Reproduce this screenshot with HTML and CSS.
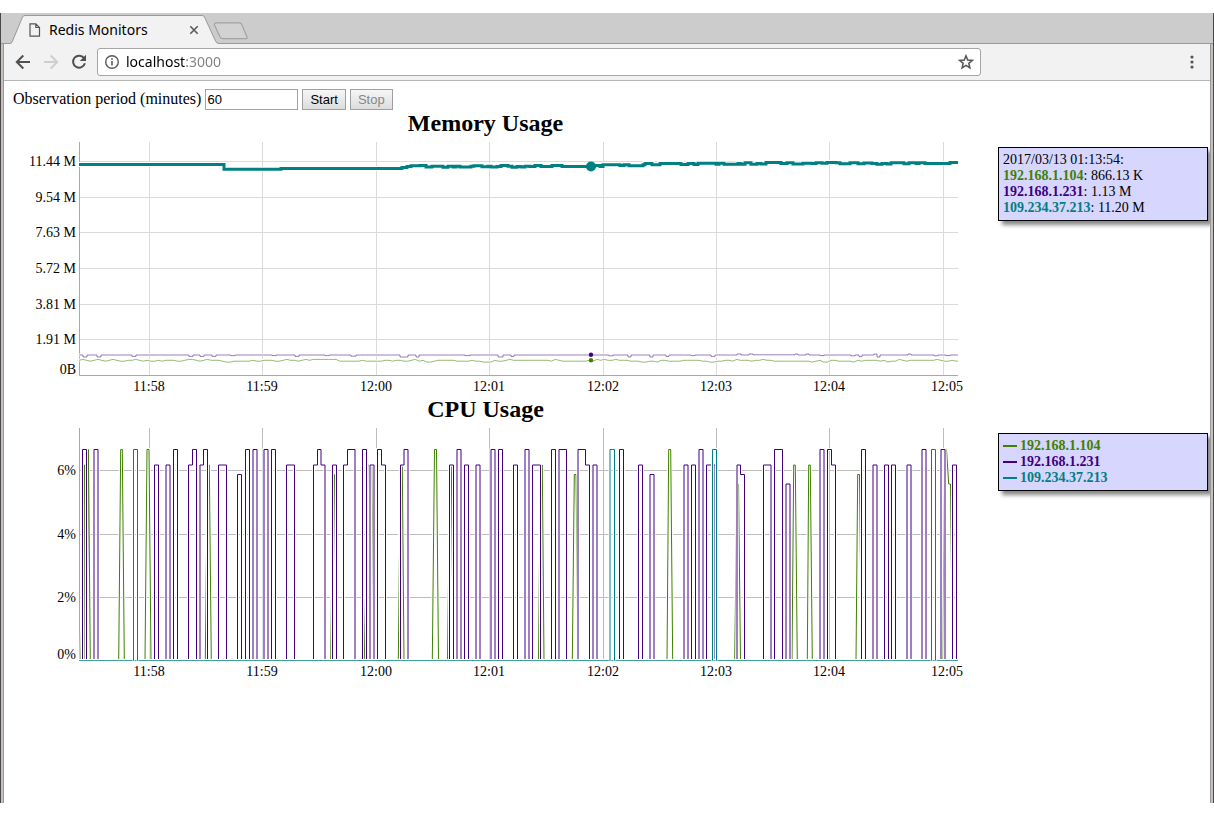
FILE: index.html
```html
<!DOCTYPE html>
<html lang="en">
<head>
<meta charset="utf-8">
<title>Redis Monitors</title>
<link rel="stylesheet" href="styles.css">
</head>
<body>
<div class="window">
  <header class="tabstrip">
    <div class="tab">
      <svg class="tab-shape" viewBox="0 0 209 31" aria-hidden="true"><path d="M0 30.5Q1.5 30.5 2.5 28L12.5 4Q13.3 2.5 15 2.5H192Q193.7 2.5 194.5 4L205.5 28Q206.5 30.5 209 30.5V31H0Z" fill="#f2f2f2"/><path d="M0 30.5Q1.5 30.5 2.5 28L12.5 4Q13.3 2.5 15 2.5H192Q193.7 2.5 194.5 4L205.5 28Q206.5 30.5 209 30.5" fill="none" stroke="#999"/></svg>
      <svg class="tab-icon" viewBox="0 0 12 14" aria-hidden="true"><path d="M1 .8H6.8L10.5 4.5V13.2H1Z M6.8 .8V4.5H10.5" fill="none" stroke="#555" stroke-width="1.2"/></svg>
      <span class="tab-title">Redis Monitors</span>
      <button class="icon-button tab-close" aria-label="Close tab"><svg viewBox="0 0 10 10" width="10" height="10"><path d="M1.3 1.3 8.7 8.7M8.7 1.3 1.3 8.7" stroke="#5a5a5a" stroke-width="1.6"/></svg></button>
    </div>
    <button class="icon-button new-tab" aria-label="New tab"><svg viewBox="0 0 36 18" width="36" height="18"><path d="M3 .9H26Q28 .9 29 3L34 15Q34.6 16.6 33 16.6H10Q8 16.6 7 15L1.5 3Q1 1 3 .9Z" fill="#d2d2d2" stroke="#a3a3a3" stroke-width="1.2"/></svg></button>
  </header>
  <nav class="toolbar">
    <button class="icon-button" aria-label="Back"><svg viewBox="0 0 16 16" width="16" height="16"><path d="M15 8H2M8.3 1.5 1.8 8l6.5 6.5" fill="none" stroke="#505050" stroke-width="2"/></svg></button>
    <button class="icon-button" aria-label="Forward" disabled><svg viewBox="0 0 16 16" width="16" height="16"><path d="M1 8H14M7.7 1.5 14.2 8l-6.5 6.5" fill="none" stroke="#cfcfcf" stroke-width="2"/></svg></button>
    <button class="icon-button" aria-label="Reload"><svg viewBox="0 0 16 16" width="16" height="16"><path d="M13 4.2A6 6 0 1 0 13.9 9.2" fill="none" stroke="#505050" stroke-width="2"/><path d="M15 .8V7H8.8Z" fill="#505050"/></svg></button>
    <div class="omnibox">
      <svg viewBox="0 0 16 16" width="16" height="16" aria-hidden="true"><circle cx="8" cy="8" r="6.3" fill="none" stroke="#5a5a5a" stroke-width="1.4"/><path d="M8 7V11.6M8 4.2V5.8" stroke="#5a5a5a" stroke-width="1.6"/></svg>
      <input class="address" type="text" value="localhost:3000" aria-label="Address">
      <button class="icon-button" aria-label="Bookmark this page"><svg viewBox="0 0 16 16" width="16" height="16"><path d="M8 1.8 9.7 6.1 14.3 6.4 10.8 9.3 11.9 13.8 8 11.3 4.1 13.8 5.2 9.3 1.7 6.4 6.3 6.1Z" fill="none" stroke="#555" stroke-width="1.5"/></svg></button>
    </div>
    <button class="icon-button menu" aria-label="Menu"><svg viewBox="0 0 4 14" width="4" height="14" fill="#555"><circle cx="2" cy="2" r="1.6"/><circle cx="2" cy="7" r="1.6"/><circle cx="2" cy="12" r="1.6"/></svg></button>
  </nav>
  <main class="page">
    <form class="controls">
      <label for="period">Observation period (minutes)</label>
      <input id="period" class="period" type="text" value="60">
      <button type="button" class="push">Start</button>
      <button type="button" class="push" disabled>Stop</button>
    </form>
    <section class="monitor">
      <div class="graph">
        <h2 class="title">Memory Usage</h2>
        <svg class="chart" id="memory" viewBox="13 -4 961 258" role="img" aria-label="Memory usage"></svg>
      </div>
      <div class="legend">
        <div>2017/03/13 01:13:54:</div>
        <div><b class="green">192.168.1.104</b>: 866.13 K</div>
        <div><b class="purple">192.168.1.231</b>: 1.13 M</div>
        <div><b class="teal">109.234.37.213</b>: 11.20 M</div>
      </div>
    </section>
    <section class="monitor">
      <div class="graph">
        <h2 class="title">CPU Usage</h2>
        <svg class="chart" id="cpu" viewBox="13 -4 961 258" role="img" aria-label="CPU usage"></svg>
      </div>
      <div class="legend">
        <div class="key green"><i class="dash"></i><b>192.168.1.104</b></div>
        <div class="key purple"><i class="dash"></i><b>192.168.1.231</b></div>
        <div class="key teal"><i class="dash"></i><b>109.234.37.213</b></div>
      </div>
    </section>
  </main>
</div>
<script src="charts.js"></script>
</body>
</html>
```
FILE: styles.css
```css
* { box-sizing: border-box; }

body {
  margin: 0;
  padding: 13px 0;
  min-height: 100vh;
  display: flex;
  background: #fff;
  color: #000;
  font-family: "Liberation Serif", "Times New Roman", serif;
  font-size: 16px;
}

.window {
  flex: 1;
  min-width: 0;
  display: flex;
  flex-direction: column;
  border: solid #4a4747;
  border-width: 0 1px;
  background: #c4c1be;
}

.icon-button {
  display: flex;
  flex: none;
  padding: 0;
  border: 0;
  background: none;
}

.tabstrip {
  display: flex;
  height: 31px;
  padding-left: 9px;
  background: #ccc;
  border-bottom: 1px solid #999;
}

.tab {
  position: relative;
  display: flex;
  align-items: center;
  width: 207px;
  height: 31px;
  padding: 3px 18px 0 19px;
}

.tab-shape {
  position: absolute;
  left: 0;
  top: 0;
  width: 209px;
  height: 31px;
}

.tab-icon {
  position: relative;
  width: 12px;
  height: 14px;
}

.tab-title {
  position: relative;
  flex: 1;
  margin-left: 8px;
  font: 14px/20px "Noto Sans", "Open Sans", sans-serif;
}

.tab-close { position: relative; }

.new-tab {
  margin: 9px 0 0 -4px;
  height: 18px;
}

.toolbar {
  display: flex;
  align-items: center;
  gap: 12px;
  height: 37px;
  margin: 0 2px;
  padding: 0 16px 2px 11px;
  background: #f2f2f2;
  border: solid #999;
  border-width: 0 1px;
  box-shadow: inset 0 -1px #b6b6b6;
}

.omnibox {
  display: flex;
  flex: 1;
  align-items: center;
  gap: 6px;
  height: 28px;
  margin-left: -2px;
  padding: 0 6px;
  background: #fff;
  border: 1px solid #a6a6a6;
  border-radius: 3px;
}

.address {
  flex: 1;
  min-width: 0;
  padding: 0;
  border: 0;
  color: transparent;
  background: linear-gradient(90deg, #000 59px, #808080 59px);
  -webkit-background-clip: text;
  background-clip: text;
  font: 14px/20px "Noto Sans", "Open Sans", sans-serif;
}

.menu { margin-left: 197px; }

.page {
  flex: 1;
  margin: 0 2px;
  padding: 8px 2px 0 9px;
  border: solid #999;
  border-width: 0 1px;
  background: #fff;
  overflow: hidden;
}

.controls {
  display: flex;
  align-items: center;
  gap: 4px;
  height: 21px;
}

.controls label { padding-bottom: 2px; }

.period, .push {
  height: 21px;
  font: 13px/15px "Liberation Sans", Arial, sans-serif;
}

.period {
  width: 93px;
  padding: 1px;
  border: 1px solid #a3a3a3;
}

.push {
  padding: 0 7px;
  color: #000;
  border: 1px solid #a0a0a0;
  background: linear-gradient(#f6f6f6, #dddddd);
}

.push:disabled { color: #888; }

.monitor {
  display: flex;
  align-items: flex-start;
  gap: 24px;
}

.graph {
  flex: 1;
  min-width: 0;
}

.title {
  margin: 0;
  padding: 0 16px 2px 0;
  text-align: center;
  font-size: 24px;
  line-height: 26px;
}

.chart {
  display: block;
  width: 100%;
  font-size: 14px;
}

.legend {
  flex: none;
  width: 210px;
  margin-top: 37px;
  padding: 4px;
  border: 1px solid #000;
  background: #d6d6ff;
  box-shadow: 4px 4px 4px #888;
  font-size: 14px;
  line-height: 16px;
}

.key {
  display: flex;
  align-items: center;
  gap: 3px;
}

.dash {
  width: 14px;
  border-top: 2px solid currentColor;
}

.green { color: #408000; }
.purple { color: #400080; }
.teal { color: #008080; }

.line { fill: none; }
.halo { fill: none; stroke: #fff; }
.axis { stroke: #a8a8a8; }
```
FILE: charts.js
```js
const LEFT = 79, RIGHT = 958;
const GREEN = '#408000', PURPLE = '#400080', TEAL = '#008080';
const times = [[149, '11:58'], [262, '11:59'], [376, '12:00'], [489, '12:01'],
  [603, '12:02'], [716, '12:03'], [829, '12:04'], [943, '12:05']];

function frame(ticks, gridColor, bottom) {
  let s = '';
  for (const [y, , grid = true] of ticks)
    if (grid) s += `<path d="M${LEFT} ${y + .5}H${RIGHT}" stroke="${gridColor}"/>`;
  for (const [x] of times)
    s += `<path d="M${x + .5} 0V${bottom}" stroke="${gridColor}"/>`;
  return s + `<path class="axis" d="M${LEFT + .5} 0V${bottom + .5}H${RIGHT}" fill="none"/>`;
}

function labels(ticks, baseline) {
  let s = '';
  for (const [y, text, grid = true] of ticks)
    s += `<text x="76" y="${grid ? y + 5 : y}" text-anchor="end">${text}</text>`;
  for (const [x, text] of times)
    s += `<text x="${x > 940 ? x + 4 : x}" y="${baseline}" text-anchor="middle">${text}</text>`;
  return s;
}

function series(d, color, width = 1, opacity = 1) {
  return `<path class="halo" d="${d}" stroke-width="${width + 2}"/>` +
    `<path class="line" d="${d}" stroke="${color}" stroke-width="${width}" stroke-opacity="${opacity}"/>`;
}

// Step line through "x y" pairs.
function steps(pairs) {
  const p = pairs.trim().split(/\s+/).map(Number);
  let d = `M${p[0]} ${p[1]}`;
  for (let i = 2; i < p.length; i += 2) d += `H${p[i]}V${p[i + 1]}`;
  return d + `H${RIGHT}`;
}

/* Memory */
const memTicks = [[19, '11.44 M'], [55, '9.54 M'], [90, '7.63 M'], [126, '5.72 M'],
  [162, '3.81 M'], [197, '1.91 M'], [232, '0B', false]];

const memTeal = steps(`79 22.6 224 27.3 281 26.6 402 25.6 407 24.6 411 23.8 420 23.4 426 25
  432 24.2 443 25.2 448 24.2 453 25 456 24.2 460 25 471 24.2 474 23.8 482 24.8 488 24.2 491 25
  497 24.4 501 23.6 508 24.2 512 25.2 517 24.4 521 25 525 24.2 530 24.6 535 23.6 541 24.6
  552 23.6 562 24.6 584 24.4 591 24 595 23.4 600 24.4 603 22.8 620 23.4
  624 22.8 629 23.8 643 22.8 645 21.6 652 22.8 660 21.4 681 22.4 688 21.6 694 22.4
  698 21.2 716 22.2 719 21.2 724 22.2 738 21.6 741 22.2 745 20.8 751 22.2 757 21.4 761 22
  766 20.6 781 21.4 787 20.8 793 22 803 21.2 812 21.4 816 20.8 822 21.2 827 20.6
  836 20.8 840 21.8 850 20.8 858 21.8 864 21 872 21.4 877 22.2 882 21.4 887 22 891 20.8
  904 21.8 909 20.8 916 21.6 919 20.8 925 21.4 950 20.4`);

const memPurple = steps(`79 213 83 215 87 213 97 215 101 213 132 214.4 136 213 189 214.4
  193 213 200 214.4 204 213 212 214.4 216 213 231 213.6 235 213 272 213.6 276 213
  295 214.4 299 213 325 213.6 329 213 351 214.2 356 213 400 215 408 213 416 215 419 213
  465 213.6 470 213 498 215 503 213 511 214.4 514 213 609 213.8 613 213 628 215 631 213
  650 215 653 213 666 214.4 669 213 691 213.6 695 213 711 214.4 715 213 737 212 741 213
  749 212 753 212.8 795 212 798 213 806 212 809 213 820 213.6 824 213 851 213.8 855 213
  859 214.6 862 213 874 212 877 215 880 213 908 212 911 213 934 213.8 938 213
  946 213.6 950 213`);

// One digit per two-second sample; a larger digit is a lower reading.
const memGreenSamples = '1012101210122110121221211122100121011123322222122111221011210' +
  '1000000022222212222211211221021332111112222122333122101111111111201' +
  '222222212010110111222332231122221111122332211201112110112222222222' +
  '3213311222231211112132201211111110122122222332110000111211222';
const memGreen = 'M' + [...memGreenSamples].slice(0, 233)
  .map((v, i) => `${(LEFT + i * 3.78).toFixed(1)} ${217.4 + v * 0.9}`).join('L') + `L${RIGHT} 219`;

document.getElementById('memory').innerHTML =
  frame(memTicks, '#dadada', 233) +
  series(memGreen, GREEN, 1, .55) +
  series(memPurple, PURPLE, 1, .5) +
  series(memTeal, TEAL, 3) +
  `<circle cx="591" cy="218.3" r="2.2" fill="${GREEN}"/>` +
  `<circle cx="591" cy="212.8" r="2.2" fill="${PURPLE}"/>` +
  `<circle cx="591" cy="24.5" r="5" fill="${TEAL}"/>` +
  labels(memTicks, 249);

/* CPU */
const cpuTicks = [[42, '6%'], [106, '4%'], [169, '2%'], [231, '0%', false]];
const LEVEL = { A: 21.5, B: 37, C: 46.5, D: 56 };
const BASE = 232.5;

// Square pulses, "x level x level x": the last x drops back to the base.
function pulses(list) {
  return list.trim().split(/\s*,\s*/).map(item => {
    const t = item.split(' ');
    let d = `M${t[0]} ${BASE}`;
    for (let i = 0; i + 1 < t.length; i += 2) d += `V${LEVEL[t[i + 1]]}H${t[i + 2]}`;
    return d + `V${BASE}`;
  }).join('');
}

const cpuPurple = pulses(`82.5 A 86.5, 94 A 98, 154.5 B 158.5, 166 B 170, 173.5 A 177.5,
  188.5 B 192.5 A 196.5, 200 B 203.5 A 207.5, 218.5 B 226.5, 237.5 C 241.5, 245.5 A 249.5,
  253 A 257, 264 A 268, 271.5 A 275.5, 286.5 B 294.5, 313.5 B 317.5 A 321 B 325,
  332.5 B 336.5, 343.5 B 347.5 A 355, 362.5 A 366.5, 370 B 374, 377.5 A 381.5 B 385.5,
  400.5 B 404 A 408, 449.5 B 453.5, 457 A 461, 464.5 B 468.5, 476 B 480, 491 A 495,
  498.5 A 502.5, 513.5 B 517.5, 525 A 529, 532.5 B 540.5, 551.5 A 555.5, 559 A 566.5,
  578 A 585.5 B 589.5, 593 B 597, 619.5 A 623.5, 638.5 B 642.5, 650 C 654, 684 B 688,
  691.5 B 695.5, 699 A 703, 706.5 B 715, 737 B 740.5 C 744.5, 763.5 B 771, 774.5 A 782.5,
  786 D 790, 820 A 824, 827.5 A 831.5 B 835.5, 861.5 A 865.5, 873 B 877, 884.5 B 888.5,
  891.5 B 895.5, 907 B 911, 922 A 926, 941 A 945, 952.5 B 956.5`);

const cpuTeal = pulses('133.5 A 137.5, 610 A 614.5, 712.5 A 716.5, 931.5 A 935.5');
const cpuFloor = `M${LEFT} ${BASE}H${RIGHT}`;

// Sloped pulses: foot, shoulder, level, shoulder, foot.
const cpuGreen = [
  [81, 84, 'B', 84.5, 85], [87, 88.3, 'A', 88.4, 90.3], [118.7, 120.7, 'A', 122.3, 124.3],
  [145, 147, 'A', 149, 151], [205.3, 207.5, 'B', 209.3, 211.3], [330.7, 333, 'C', 334.5, 336.5],
  [364.3, 368, 'B', 372, 374], [398.3, 400.5, 'B', 402.3, 404], [432.3, 434.5, 'A', 436.5, 438.5],
  [447.5, 450, 'B', 451.3, 453.3], [538.5, 540.5, 'B', 542.3, 544], [572.3, 574.3, 'C', 576, 578],
  [667, 668.7, 'A', 670.7, 672.7], [734.7, 737, 'D', 738.5, 740.5], [792, 793.7, 'B', 795.3, 797.3],
  [807.3, 808.7, 'B', 810.3, 812.3], [856, 857.7, 'C', 859.5, 861.5]
].map(([a, b, l, c, e]) => `M${a} ${BASE}L${b} ${LEVEL[l]}H${c}L${e} ${BASE}`).join('') +
  `M942.7 ${BASE}L944.7 ${LEVEL.A}H946.5L948.7 ${LEVEL.D}H950.5L952.5 ${BASE}`;

document.getElementById('cpu').innerHTML =
  frame(cpuTicks, '#bdbdbd', 232) +
  series(cpuGreen, GREEN) +
  series(cpuPurple, PURPLE) +
  series(cpuFloor, TEAL, 1, .75) +
  series(cpuTeal, TEAL) +
  labels(cpuTicks, 248);
```
